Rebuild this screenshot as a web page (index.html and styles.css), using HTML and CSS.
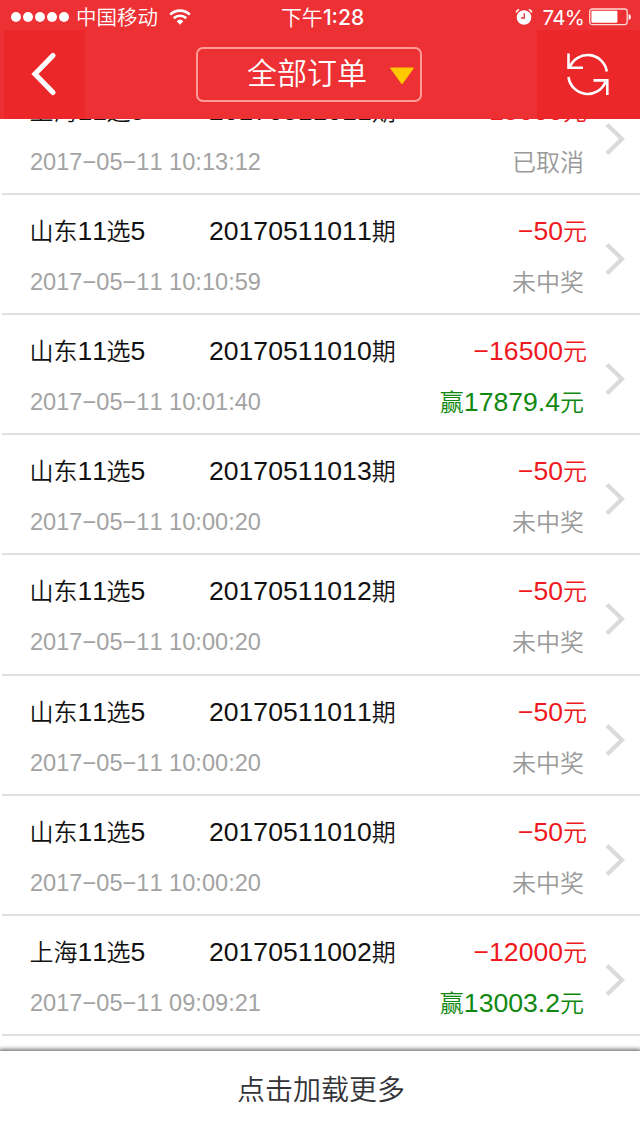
FILE: index.html
```
<!DOCTYPE html>
<html lang="zh-CN">
<head>
<meta charset="utf-8">
<title>全部订单</title>
<link rel="stylesheet" href="styles.css">
</head>
<body>
<div class="screen">
  <header class="header">
    <div class="status-bar">
      <div class="carrier">
        <span class="signal"><i></i><i></i><i></i><i></i><i></i></span>
        <span>中国移动</span>
        <svg class="wifi" width="22" height="16" viewBox="0 0 22 16" fill="none" stroke="#fff" stroke-width="2.6"><path d="M1.2 5.6a14 14 0 0 1 19.6 0"/><path d="M4.7 9.3a9 9 0 0 1 12.6 0"/><path d="M11 15.8 7.6 12.2a5 5 0 0 1 6.8 0z" fill="#fff" stroke="none"/></svg>
      </div>
      <div class="clock">下午<b>1:28</b></div>
      <div class="power">
        <svg class="alarm" width="18" height="18" viewBox="0 0 18 18"><circle cx="9" cy="9.5" r="7.3" fill="#fff"/><path d="M1.2 4.5a4 4 0 0 1 3-3M16.8 4.5a4 4 0 0 0-3-3" stroke="#fff" stroke-width="1.6" fill="none"/><path d="M9.3 5.2V10H6" stroke="#ed3033" stroke-width="1.3" fill="none"/></svg>
        <span class="percent">74%</span>
        <svg width="43" height="18" viewBox="0 0 43 18"><rect x=".7" y="1" width="37.5" height="15.6" rx="2.5" fill="none" stroke="#ffd9d6" stroke-width="1.3"/><rect x="2.4" y="2.8" width="26" height="12" rx="1" fill="#fff"/><path d="M39.6 6c3 .5 3 5.5 0 6z" fill="#fff"/></svg>
      </div>
    </div>
    <nav class="nav">
      <div class="nav-button back"><svg width="28" height="46" viewBox="0 0 28 46" fill="none" stroke="#fff" stroke-width="5.2" stroke-linecap="round"><path d="M24 4.5 6 23 24 41.5"/></svg></div>
      <div class="filter"><span>全部订单</span><svg width="26" height="18" viewBox="0 0 26 18"><path d="M1.5 1h23L13 17z" fill="#ffc800" stroke="#ffc800" stroke-linejoin="round"/></svg></div>
      <div class="nav-button refresh"><svg width="44" height="44" viewBox="0 0 44 44" fill="none" stroke="#fff" stroke-width="2.6"><path d="M2.5 1.5v14.3H17M3.5 16A19.3 19.3 0 0 1 40.8 19.5"/><path d="M2.5 25A19.3 19.3 0 0 0 39.5 30M27.5 28.4H41.3V43"/></svg></div>
    </nav>
  </header>

  <main class="orders">
    <article class="order"><div class="name"><em>上海</em>11<em>选</em>5</div><div class="issue">20170511011<em>期</em></div><div class="cost">−15000<em>元</em></div><time>2017−05−11 10:13:12</time><div class="result"><em>已取消</em></div><svg class="chevron" viewBox="0 0 20 32"><path d="M2 1.5 17 16 2 30.5"/></svg></article>
    <article class="order"><div class="name"><em>山东</em>11<em>选</em>5</div><div class="issue">20170511011<em>期</em></div><div class="cost">−50<em>元</em></div><time>2017−05−11 10:10:59</time><div class="result"><em>未中奖</em></div><svg class="chevron" viewBox="0 0 20 32"><path d="M2 1.5 17 16 2 30.5"/></svg></article>
    <article class="order"><div class="name"><em>山东</em>11<em>选</em>5</div><div class="issue">20170511010<em>期</em></div><div class="cost">−16500<em>元</em></div><time>2017−05−11 10:01:40</time><div class="result win"><em>赢</em>17879.4<em>元</em></div><svg class="chevron" viewBox="0 0 20 32"><path d="M2 1.5 17 16 2 30.5"/></svg></article>
    <article class="order"><div class="name"><em>山东</em>11<em>选</em>5</div><div class="issue">20170511013<em>期</em></div><div class="cost">−50<em>元</em></div><time>2017−05−11 10:00:20</time><div class="result"><em>未中奖</em></div><svg class="chevron" viewBox="0 0 20 32"><path d="M2 1.5 17 16 2 30.5"/></svg></article>
    <article class="order"><div class="name"><em>山东</em>11<em>选</em>5</div><div class="issue">20170511012<em>期</em></div><div class="cost">−50<em>元</em></div><time>2017−05−11 10:00:20</time><div class="result"><em>未中奖</em></div><svg class="chevron" viewBox="0 0 20 32"><path d="M2 1.5 17 16 2 30.5"/></svg></article>
    <article class="order"><div class="name"><em>山东</em>11<em>选</em>5</div><div class="issue">20170511011<em>期</em></div><div class="cost">−50<em>元</em></div><time>2017−05−11 10:00:20</time><div class="result"><em>未中奖</em></div><svg class="chevron" viewBox="0 0 20 32"><path d="M2 1.5 17 16 2 30.5"/></svg></article>
    <article class="order"><div class="name"><em>山东</em>11<em>选</em>5</div><div class="issue">20170511010<em>期</em></div><div class="cost">−50<em>元</em></div><time>2017−05−11 10:00:20</time><div class="result"><em>未中奖</em></div><svg class="chevron" viewBox="0 0 20 32"><path d="M2 1.5 17 16 2 30.5"/></svg></article>
    <article class="order"><div class="name"><em>上海</em>11<em>选</em>5</div><div class="issue">20170511002<em>期</em></div><div class="cost">−12000<em>元</em></div><time>2017−05−11 09:09:21</time><div class="result win"><em>赢</em>13003.2<em>元</em></div><svg class="chevron" viewBox="0 0 20 32"><path d="M2 1.5 17 16 2 30.5"/></svg></article>
  </main>

  <footer class="load-more">点击加载更多</footer>
</div>
</body>
</html>
```
FILE: styles.css
```
* { box-sizing: border-box; }

body {
  margin: 0;
  background: #fff;
  font-family: "Liberation Sans", "Noto Sans CJK SC", sans-serif;
  font-kerning: none;
}

.screen {
  width: 640px;
  height: 1139px;
  display: flex;
  flex-direction: column;
  overflow: hidden;
}

.header {
  flex: none;
  height: 118.5px;
  background: #ed3033;
  color: #fff;
  position: relative;
  z-index: 1;
}

.status-bar {
  height: 30px;
  display: grid;
  grid-template-columns: 1fr auto 1fr;
  padding: 2px 6px 0 11px;
  font: 350 20.5px/28px "Noto Sans CJK SC", sans-serif;
}

.carrier, .power { display: flex; align-items: center; height: 30px; }
.signal { display: flex; gap: 2px; margin-right: 7px; }
.signal i { width: 10px; height: 10px; border-radius: 50%; background: #fff; }
.wifi { margin-left: 11px; }
.carrier > span + span { margin-top: -2px; }
.clock { font-size: 21px; }
.clock b { font: 500 21px Inter, sans-serif; }
.power { justify-content: flex-end; padding-right: 2px; }
.alarm { margin-right: 10px; }
.percent { font: 400 20.5px Inter, sans-serif; margin-right: 5px; letter-spacing: -0.8px; }

.nav {
  height: 88.5px;
  display: flex;
  padding-left: 4px;
}

.nav-button { display: flex; background: #ec2729; }
.back { width: 81px; padding: 21px 0 0 25px; }
.refresh { width: 103px; margin-left: auto; padding: 22px 0 0 29px; }

.filter {
  width: 226px;
  height: 55px;
  margin: 17px 0 0 111px;
  border: 2px solid #ff9c98;
  border-radius: 7px;
  display: flex;
  align-items: center;
  padding-left: 49px;
  font: 350 30px/44px "Noto Sans CJK SC", sans-serif;
}
.filter span { margin-top: -7px; }
.filter svg { margin: 3px 0 0 22px; }

.orders { flex: none; height: 961.2px; margin: -43.6px 0 0 2px; }

.order {
  height: 120.14px;
  border-bottom: 2px solid #e0e0e0;
  display: grid;
  grid-template-columns: 179px 196px 1fr 53px;
  grid-template-rows: 50px 50px;
  padding: 11px 0 0 28px;
  font-size: 26.6px;
  line-height: 50px;
  color: #111;
  white-space: nowrap;
}

.order em {
  font: 350 24px/1px "Noto Sans CJK SC", sans-serif;
}

.name em { margin-left: -0.5px; }
.issue { grid-column: 2; }
.cost { grid-column: 3; text-align: right; color: #f01820; }

.order time {
  grid-column: 1 / 3;
  grid-row: 2;
  font-size: 23.6px;
  padding-top: 1px;
  color: #a3a3a3;
}

.result {
  grid-column: 3;
  grid-row: 2;
  padding: 1px 3px 0 0;
  text-align: right;
  color: #999;
}
.win { color: #108810; }

.chevron {
  grid-column: 4;
  grid-row: 1 / 3;
  width: 20px;
  height: 32px;
  margin: 37px 0 0 18px;
  fill: none;
  stroke: #dadada;
  stroke-width: 4.2;
}

.load-more {
  flex: 1;
  margin: 14.7px 0 0;
  box-shadow: 0 -1px 4px 1px #777;
  text-align: center;
  padding-left: 2px;
  font: 350 28px/74px "Noto Sans CJK SC", sans-serif;
  color: #333338;
}
```
